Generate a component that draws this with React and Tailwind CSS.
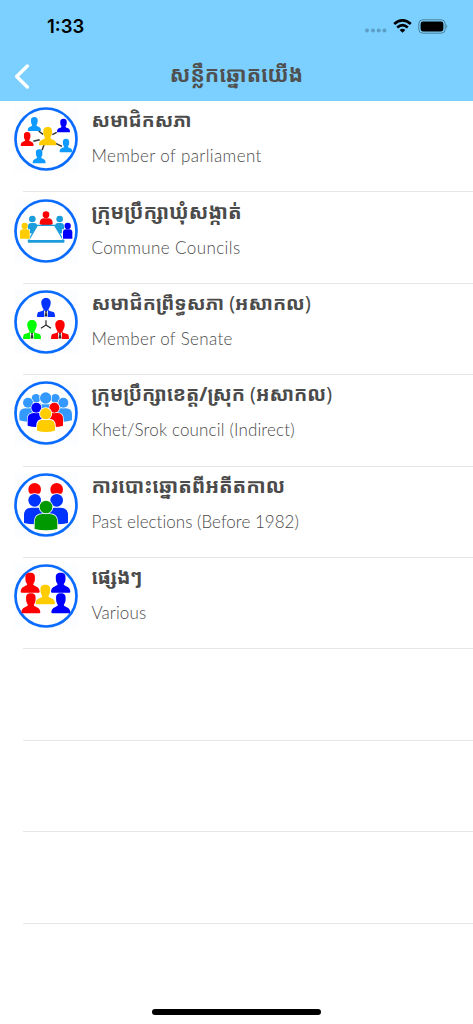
const RED = '#ff0000'
const YELLOW = '#ffcc00'
const NAVY = '#0000ff'
const SKY = '#0d9bff'
const TEAL = '#1b9ddb'

// Oval head with flared shoulders
function Bust({ x, y, w, h, color }) {
  return (
    <path
      transform={`translate(${x} ${y}) scale(${w / 100} ${h / 100})`}
      fill={color}
      d="M50 0C31 0 24 9 25 25C24 41 29 50 34 57C35 63 29 65 19 69C7 73 0 82 0 95Q0 100 6 100H94Q100 100 100 95C100 82 93 73 81 69C71 65 65 63 66 57C71 50 76 41 75 25C76 9 69 0 50 0Z"
    />
  )
}

// Round head above a separate rounded body
function Person({ cx, cy, r, left, right, top, bottom, color, outline = 0 }) {
  const w = right - left
  const k = Math.min(w * 0.36, bottom - top)
  const body = `M${left} ${bottom - 4}V${top + k}Q${left} ${top} ${left + k} ${top}H${right - k}Q${right} ${top} ${right} ${top + k}V${bottom - 4}Q${(left + right) / 2} ${bottom + 4} ${left} ${bottom - 4}Z`
  return (
    <g fill={color} stroke="#fff" strokeWidth={outline} style={{ paintOrder: 'stroke' }}>
      <path d={body} />
      <circle cx={cx} cy={cy} r={r} />
    </g>
  )
}

function Suit({ x, y, color }) {
  return (
    <g transform={`translate(${x} ${y})`}>
      <path fill={color} d="M0 0C-11 0-15 8-14 17C-13 26-8 31-7 36C-9 40-18 40-24 43Q-27 46-27 57H27Q27 46 24 43C18 40 9 40 7 36C8 31 13 26 14 17C15 8 11 0 0 0Z" />
      <path fill="#fff" d="M-6 37L0 41L6 37L5 57H-5Z" />
      <path fill="#333" d="M-3 39H3L2 43L4 53L0 57L-4 53L-2 43Z" />
    </g>
  )
}

function NetworkIcon() {
  return (
    <>
      <path d="M87 82L74 72M115 83L128 76M77 98L58 103M125 109L144 118M90 114L84 130" stroke="#333" strokeWidth="4.5" />
      <Bust x={41} y={30} w={40} h={42} color={SKY} />
      <Bust x={129} y={35} w={39} h={41} color={NAVY} />
      <Bust x={20} y={75} w={39} h={42} color={RED} />
      <Bust x={137} y={95} w={38} h={41} color={SKY} />
      <Bust x={56} y={127} w={39} h={42} color={SKY} />
      <Bust x={75} y={60} w={52} h={55} color={YELLOW} />
    </>
  )
}

function TableIcon() {
  return (
    <>
      <Person cx={55} cy={60} r={10} left={42} right={70} top={72} bottom={104} color={TEAL} />
      <Person cx={137} cy={60} r={10} left={123} right={150} top={72} bottom={104} color={TEAL} />
      <Person cx={96} cy={47} r={10} left={77} right={116} top={58} bottom={80} color={RED} />
      <path d="M70 79H122L149 125H43Z" fill="#fff" stroke={TEAL} strokeWidth="3.5" />
      <path d="M42 123H151V131H42Z" fill={TEAL} />
      <path d="M17 91H48V121H17ZM144 91H176V121H144Z" fill="#fff" />
      <circle cx="32" cy="81" r="9.5" fill={YELLOW} />
      <path d="M18 119V100Q18 91 27 91H38Q47 91 47 100V119Z" fill={YELLOW} />
      <circle cx="161" cy="81" r="9.5" fill={NAVY} />
      <path d="M147 119V100Q147 91 156 91H166Q175 91 175 100V119Z" fill={NAVY} />
    </>
  )
}

function SenateIcon() {
  return (
    <>
      <path d="M96 91V105L81 115M96 105L111 115" fill="none" stroke="#222" strokeWidth="3.5" />
      <Suit x={96} y={24} color="#0033ff" />
      <Suit x={54} y={90} color="#00ff00" />
      <Suit x={138} y={90} color={RED} />
    </>
  )
}

function CouncilIcon() {
  return (
    <>
      <Person cx={66} cy={52} r={13} left={48} right={86} top={66} bottom={90} color="#3399ff" outline={4} />
      <Person cx={124} cy={52} r={13} left={104} right={144} top={66} bottom={90} color="#3399ff" outline={4} />
      <Person cx={42} cy={65} r={15} left={16} right={68} top={82} bottom={122} color="#3399ff" outline={4} />
      <Person cx={148} cy={65} r={15} left={122} right={174} top={82} bottom={122} color="#3399ff" outline={4} />
      <Person cx={95} cy={51} r={17} left={66} right={125} top={70} bottom={106} color="#3399ff" outline={4} />
      <Person cx={67} cy={80} r={15} left={41} right={92} top={96} bottom={138} color={NAVY} outline={4} />
      <Person cx={121} cy={80} r={15} left={98} right={147} top={96} bottom={138} color={RED} outline={4} />
      <Person cx={95} cy={98} r={17} left={69} right={123} top={116} bottom={153} color={YELLOW} outline={5} />
    </>
  )
}

function PastIcon() {
  return (
    <>
      <path d="M48 62A19 19 0 1 1 76 62ZM114 62A19 19 0 1 1 142 62Z" fill={RED} />
      <Person cx={62} cy={82} r={19} left={30} right={94} top={104} bottom={154} color="#0033ff" outline={4} />
      <Person cx={128} cy={82} r={19} left={98} right={162} top={104} bottom={154} color="#0033ff" outline={4} />
      <Person cx={96} cy={102} r={19} left={62} right={130} top={123} bottom={172} color="#009900" outline={5} />
    </>
  )
}

function VariousIcon() {
  return (
    <>
      <Bust x={20} y={26} w={57} h={60} color={RED} />
      <Bust x={111} y={26} w={58} h={60} color={NAVY} />
      <Bust x={22} y={88} w={57} h={60} color={RED} />
      <Bust x={112} y={88} w={57} h={60} color={NAVY} />
      <Bust x={65} y={62} w={58} h={59} color={YELLOW} />
    </>
  )
}

const ITEMS = [
  { km: 'សមាជិកសភា', en: 'Member of parliament', Icon: NetworkIcon, kmClass: 'text-[19px]', enClass: 'tracking-[0.38px]' },
  { km: 'ក្រុមប្រឹក្សាឃុំសង្កាត់', en: 'Commune Councils', Icon: TableIcon, kmClass: 'text-[20.1px]', enClass: 'tracking-[0.4px]' },
  { km: 'សមាជិកព្រឹទ្ធសភា', note: 'អសាកល', en: 'Member of Senate', Icon: SenateIcon, kmClass: 'text-[19.4px]', enClass: 'tracking-[0.35px]' },
  { km: 'ក្រុមប្រឹក្សាខេត្ត/ស្រុក', note: 'អសាកល', en: 'Khet/Srok council (Indirect)', Icon: CouncilIcon, kmClass: 'text-[19.5px]', enClass: 'tracking-[0.16px]' },
  { km: 'ការបោះឆ្នោតពីអតីតកាល', en: 'Past elections (Before 1982)', Icon: PastIcon, kmClass: 'text-[20px]', enClass: 'tracking-[0.02px]' },
  { km: 'ផ្សេងៗ', en: 'Various', Icon: VariousIcon, kmClass: 'text-[19.6px]', enClass: 'tracking-[0.1px]' },
]

function Row({ item }) {
  return (
    <li className="h-[91.4px] flex flex-col">
      <div className="flex-1 flex pl-3.5 pt-[6.3px]">
        {item && (
          <>
            <svg viewBox="0 0 192 192" className="w-16 h-16 shrink-0 bg-[#fcfdff]">
              <circle cx="96" cy="96" r="91.5" fill="#fff" stroke="#0a6cff" strokeWidth="8" />
              <item.Icon />
            </svg>
            <div className="ml-[13.5px] whitespace-nowrap text-[#4b4b4b]">
              <p className={`h-[27px] leading-[26px] font-bold font-['Noto_Sans_Khmer','Khmer_OS','Noto_Sans',sans-serif] ${item.kmClass}`}>
                {item.km}
                {item.note && <> <span className="font-normal">(</span>{item.note}<span className="font-normal">)</span></>}
              </p>
              <p className={`mt-2 h-7 leading-7 text-[17px] font-light font-['Lato',sans-serif] ${item.enClass}`}>{item.en}</p>
            </div>
          </>
        )}
      </div>
      <div className="ml-[23px] h-px bg-[#e6e6e7]" />
    </li>
  )
}

function StatusBar() {
  return (
    <div className="h-[52px] flex items-center justify-between pl-[47px] pr-[25px]">
      <span className="mt-px text-[18.5px] font-semibold text-black font-['Inter',sans-serif]">1:33</span>
      <div className="flex items-center">
        <svg viewBox="0 0 22 5" className="w-[22px] h-[5px] mt-2 mr-[6px]" fill="#5b9fc6">
          <circle cx="2" cy="2.5" r="2" />
          <circle cx="8" cy="2.5" r="2" />
          <circle cx="13.7" cy="2.5" r="2" />
          <circle cx="19.4" cy="2.5" r="2" />
        </svg>
        <svg viewBox="0 0 19 14" className="w-[19px] h-[14px]">
          <path d="M1.2 5Q9.5-2.2 17.8 5M4.2 8.4Q9.5 3.8 14.8 8.4" fill="none" stroke="#000" strokeWidth="2.7" />
          <path d="M6.6 11Q9.5 8.6 12.4 11L9.5 13.8Z" />
        </svg>
        <svg viewBox="0 0 30 15" className="ml-[6px] w-[30px] h-[15px]">
          <rect x="0.8" y="0.8" width="26.4" height="13.4" rx="4" fill="none" stroke="#4c8099" />
          <rect x="2.6" y="2.6" width="22.8" height="9.8" rx="2.3" />
          <path d="M28.3 5.3Q30.2 7.5 28.3 9.7Z" fill="#4c8099" />
        </svg>
      </div>
    </div>
  )
}

export default function App() {
  return (
    <div className="w-full h-screen overflow-hidden flex flex-col bg-white">
      <header className="h-[101px] shrink-0 bg-[#7bd0ff]">
        <StatusBar />
        <div className="h-[49px] flex items-center px-[14px]">
          <svg viewBox="0 0 16 26" className="w-4 h-[26px] shrink-0" fill="none" stroke="#fff" strokeWidth="3.4" strokeLinecap="round" strokeLinejoin="round">
            <path d="M13.3 2L2.7 12.5L13.3 23" />
          </svg>
          <h1 className="flex-1 text-center pr-4 mb-1.5 whitespace-nowrap text-[21.2px] leading-8 font-bold text-[#505050] font-['Noto_Sans_Khmer','Khmer_OS','Noto_Sans',sans-serif]">សន្លឹកឆ្នោតយើង</h1>
        </div>
      </header>
      <ul className="flex-1">
        {ITEMS.map(item => <Row key={item.en} item={item} />)}
        {[1, 2, 3].map(n => <Row key={n} />)}
      </ul>
      <div className="mx-auto mb-[9px] w-[169px] h-[6px] shrink-0 rounded-full bg-black" />
    </div>
  )
}
